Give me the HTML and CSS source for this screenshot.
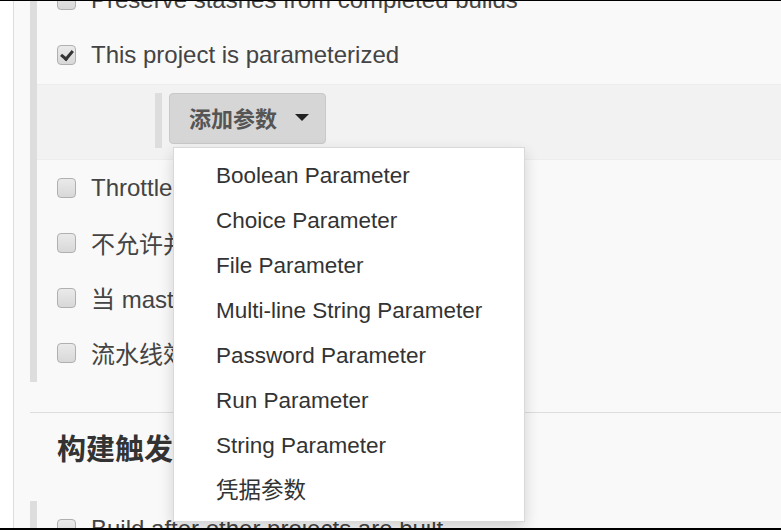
FILE: index.html
```html
<!DOCTYPE html>
<html lang="zh">
<head>
<meta charset="utf-8"/>
<title>Jenkins | 配置</title>
<meta content="width=device-width, initial-scale=1.0" name="viewport"/>
<link rel="stylesheet" href="styles.css">
</head>
<body>
<div class="page">
  <div class="panel">
    <div class="group first">
      <div class="row"><span class="check"></span><span class="label">Preserve stashes from completed builds</span></div>
      <div class="row"><span class="check checked"></span><span class="label">This project is parameterized</span></div>
      <div class="nested">
        <div class="nested-bar">
          <button class="add-btn">添加参数 <span class="caret"></span></button>
        </div>
      </div>
      <div class="row"><span class="check"></span><span class="label">Throttle builds</span></div>
      <div class="row"><span class="check"></span><span class="label">不允许并发构建</span></div>
      <div class="row"><span class="check"></span><span class="label">当 master 重启后不允许恢复流水线</span></div>
      <div class="row"><span class="check"></span><span class="label">流水线效率、持久保存设置覆盖</span></div>
    </div>
    <div class="divider"></div>
    <h2 class="section-title">构建触发器</h2>
    <div class="group">
      <div class="row"><span class="check"></span><span class="label">Build after other projects are built</span></div>
    </div>
  </div>

  <ul class="menu">
    <li>Boolean Parameter</li>
    <li>Choice Parameter</li>
    <li>File Parameter</li>
    <li>Multi-line String Parameter</li>
    <li>Password Parameter</li>
    <li>Run Parameter</li>
    <li>String Parameter</li>
    <li>凭据参数</li>
  </ul>
</div>
</body>
</html>
```

FILE: styles.css
```css
html, body {
  margin: 0;
  padding: 0;
}
body {
  font-family: 'Liberation Sans', 'Noto Sans CJK SC', sans-serif;
  color: #333;
  background: #fff;
}
.page {
  position: relative;
  height: 530px;
  box-sizing: border-box;
  border-top: 1px solid #000;
  border-bottom: 2px solid #000;
  padding-left: 13px;
  overflow: hidden;
}
.panel {
  min-height: 100%;
  background: #f9f9f9;
  border-left: 1px solid #ddd;
  padding-left: 16px;
}
.group {
  border-left: 7px solid #ddd;
}
.group.first {
  margin-top: -29px;
  padding-bottom: 2px;
}
.row {
  display: flex;
  align-items: center;
  height: 55px;
  padding-left: 20px;
}
.check {
  width: 17px;
  height: 18px;
  border: 1px solid #b0b0b0;
  border-radius: 4px;
  background: linear-gradient(#eaeaea, #d8d8d8);
  margin-right: 15px;
  position: relative;
  flex: none;
}
.check.checked::after {
  content: "";
  position: absolute;
  left: 5px;
  top: 2px;
  width: 5px;
  height: 9px;
  border: solid #333;
  border-width: 0 3px 3px 0;
  transform: rotate(40deg);
}
.label {
  font-size: 24px;
  color: #444;
  white-space: nowrap;
}
.nested {
  background: #f2f2f2;
  padding: 8px 0 11px 118px;
  margin-top: 2px;
  border-top: 1px solid #ededed;
  border-bottom: 1px solid #ededed;
}
.nested-bar {
  border-left: 7px solid #ddd;
  padding: 0 0 4px 7px;
}
.add-btn {
  display: flex;
  align-items: center;
  width: 157px;
  height: 51px;
  padding: 0 0 3px 19px;
  background: #d6d6d6;
  border: 1px solid #c9c9c9;
  border-radius: 4px;
  font-family: 'Liberation Sans', 'Noto Sans CJK SC', sans-serif;
  font-size: 22px;
  font-weight: bold;
  color: #555;
}
.caret {
  display: inline-block;
  margin-left: 18px;
  border-left: 7px solid transparent;
  border-right: 7px solid transparent;
  border-top: 7px solid #222;
}
.divider {
  margin-top: 30px;
  border-top: 1px solid #ddd;
}
.section-title {
  margin: 0;
  padding: 17px 0 0 27px;
  height: 88px;
  box-sizing: border-box;
  font-size: 29px;
  line-height: 40px;
  color: #333;
}
.menu {
  position: absolute;
  left: 173px;
  top: 146px;
  width: 350px;
  margin: 0;
  padding: 6px 0 7px;
  list-style: none;
  background: #fff;
  border: 1px solid rgba(0,0,0,0.15);
  box-shadow: 0 6px 14px rgba(0,0,0,0.16);
}
.menu li {
  height: 45px;
  line-height: 44px;
  padding-left: 42px;
  font-size: 22.5px;
  color: #333;
  white-space: nowrap;
}
```
